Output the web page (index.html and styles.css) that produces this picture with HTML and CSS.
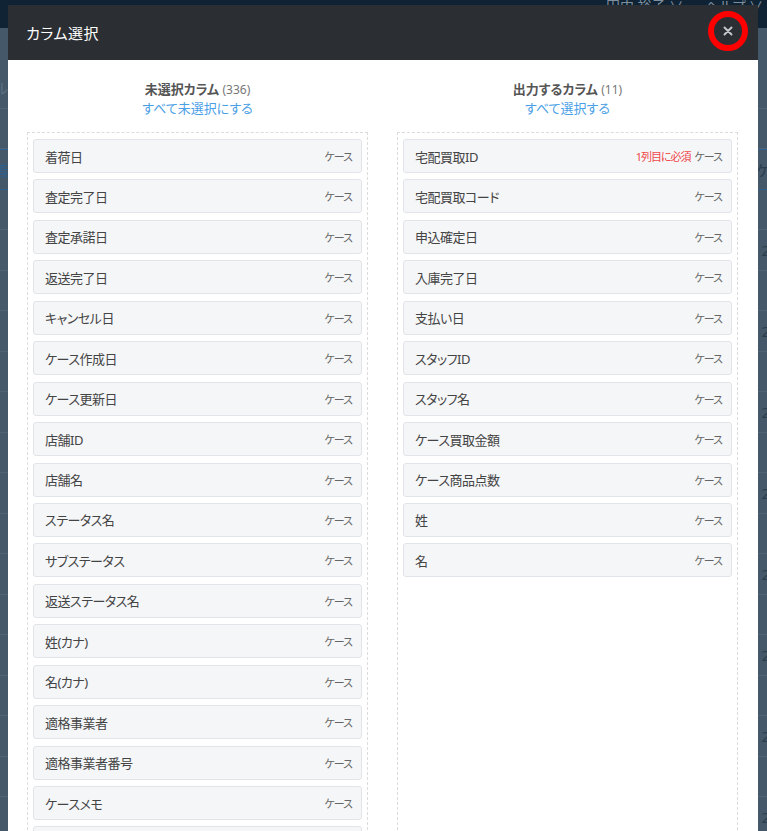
FILE: index.html
```html
<!DOCTYPE html>
<html lang="ja">
<head>
    <meta charset="UTF-8">
    <meta name="viewport" content="width=device-width, initial-scale=1.0">
    <title>カラム選択</title>
    <link rel="stylesheet" href="styles.css">
</head>
<body>

<!-- 背景のページ (モーダルで暗くなっている) -->
<div class="page">
    <div class="topbar">
        <span class="user">田中 裕子 ∨</span>
        <span class="help">ヘルプ ∨</span>
    </div>
    <div class="rows">
        <div class="row"><span class="cell-l">ル</span><span class="cell-r"></span></div>
        <div class="row"><span class="cell-l"></span><span class="cell-r"></span></div>
        <div class="row row-active"><span class="cell-l">着</span><span class="cell-r">ケ</span></div>
        <div class="row"><span class="cell-l"></span><span class="cell-r"></span></div>
        <div class="row"><span class="cell-l"></span><span class="cell-r">2</span></div>
        <div class="row"><span class="cell-l"></span><span class="cell-r"></span></div>
        <div class="row"><span class="cell-l"></span><span class="cell-r">2</span></div>
        <div class="row"><span class="cell-l"></span><span class="cell-r"></span></div>
        <div class="row"><span class="cell-l"></span><span class="cell-r">2</span></div>
        <div class="row"><span class="cell-l"></span><span class="cell-r"></span></div>
        <div class="row"><span class="cell-l"></span><span class="cell-r">2</span></div>
        <div class="row"><span class="cell-l"></span><span class="cell-r"></span></div>
        <div class="row"><span class="cell-l"></span><span class="cell-r">2</span></div>
        <div class="row"><span class="cell-l"></span><span class="cell-r"></span></div>
        <div class="row"><span class="cell-l"></span><span class="cell-r">2</span></div>
        <div class="row"><span class="cell-l"></span><span class="cell-r"></span></div>
        <div class="row"><span class="cell-l"></span><span class="cell-r">2</span></div>
        <div class="row"><span class="cell-l"></span><span class="cell-r"></span></div>
        <div class="row"><span class="cell-l"></span><span class="cell-r">2</span></div>
        <div class="row"><span class="cell-l"></span><span class="cell-r"></span></div>
    </div>
</div>

<!-- カラム選択 Modal -->
<div class="modal">
    <div class="modal-header">
        <h2>カラム選択</h2>
        <button class="close" type="button">
            <svg width="10" height="10" viewBox="0 0 10 10"><path d="M1.5 1.5L8.5 8.5M8.5 1.5L1.5 8.5" stroke="#c4c6c8" stroke-width="2" stroke-linecap="round"/></svg>
        </button>
    </div>
    <div class="modal-body">
        <div class="col">
            <div class="col-head">
                <div class="col-title"><b>未選択カラム</b> <span class="count">(336)</span></div>
                <a class="col-link" href="#">すべて未選択にする</a>
            </div>
            <ul class="col-list">
                <li class="item"><span>着荷日</span><span class="tag">ケース</span></li>
                <li class="item"><span>査定完了日</span><span class="tag">ケース</span></li>
                <li class="item"><span>査定承諾日</span><span class="tag">ケース</span></li>
                <li class="item"><span>返送完了日</span><span class="tag">ケース</span></li>
                <li class="item"><span>キャンセル日</span><span class="tag">ケース</span></li>
                <li class="item"><span>ケース作成日</span><span class="tag">ケース</span></li>
                <li class="item"><span>ケース更新日</span><span class="tag">ケース</span></li>
                <li class="item"><span>店舗ID</span><span class="tag">ケース</span></li>
                <li class="item"><span>店舗名</span><span class="tag">ケース</span></li>
                <li class="item"><span>ステータス名</span><span class="tag">ケース</span></li>
                <li class="item"><span>サブステータス</span><span class="tag">ケース</span></li>
                <li class="item"><span>返送ステータス名</span><span class="tag">ケース</span></li>
                <li class="item"><span>姓(カナ)</span><span class="tag">ケース</span></li>
                <li class="item"><span>名(カナ)</span><span class="tag">ケース</span></li>
                <li class="item"><span>適格事業者</span><span class="tag">ケース</span></li>
                <li class="item"><span>適格事業者番号</span><span class="tag">ケース</span></li>
                <li class="item"><span>ケースメモ</span><span class="tag">ケース</span></li>
                <li class="item"><span>ケース備考</span><span class="tag">ケース</span></li>
            </ul>
        </div>
        <div class="col">
            <div class="col-head">
                <div class="col-title"><b>出力するカラム</b> <span class="count">(11)</span></div>
                <a class="col-link" href="#">すべて選択する</a>
            </div>
            <ul class="col-list">
                <li class="item"><span>宅配買取ID</span><span class="tag"><span class="required">1列目に必須</span>ケース</span></li>
                <li class="item"><span>宅配買取コード</span><span class="tag">ケース</span></li>
                <li class="item"><span>申込確定日</span><span class="tag">ケース</span></li>
                <li class="item"><span>入庫完了日</span><span class="tag">ケース</span></li>
                <li class="item"><span>支払い日</span><span class="tag">ケース</span></li>
                <li class="item"><span>スタッフID</span><span class="tag">ケース</span></li>
                <li class="item"><span>スタッフ名</span><span class="tag">ケース</span></li>
                <li class="item"><span>ケース買取金額</span><span class="tag">ケース</span></li>
                <li class="item"><span>ケース商品点数</span><span class="tag">ケース</span></li>
                <li class="item"><span>姓</span><span class="tag">ケース</span></li>
                <li class="item"><span>名</span><span class="tag">ケース</span></li>
            </ul>
        </div>
    </div>
</div>

</body>
</html>
```

FILE: styles.css
```css
html, body {
    height: 100%;
}
body {
    margin: 0;
    overflow: hidden;
    background-color: #44586a;
    font-family: "Noto Sans", "Noto Sans CJK JP", sans-serif;
    font-feature-settings: "palt";
}

/* 背景ページ */
.topbar {
    height: 28px;
    background-color: #0f2335;
    display: flex;
    justify-content: flex-end;
    gap: 22px;
    padding-right: 4px;
    color: #7f8e9c;
    font-size: 14px;
    line-height: 12px;
}
.rows {
    padding-top: 40px;
}
.row {
    height: 40.5px;
    box-sizing: border-box;
    border-bottom: 1px solid #4f6376;
    display: flex;
    justify-content: space-between;
    align-items: center;
    color: #2c3d4c;
    font-size: 15px;
}
.row-active {
    border-top: 1px solid #2f5f8c;
    border-bottom: 1px solid #2f5f8c;
}
.row-active .cell-l {
    color: #2f5f8c;
}
.cell-l {
    margin-left: -6px;
    color: #5d6f80;
}
.cell-r {
    margin-right: -3px;
}

/* モーダル */
.modal {
    position: fixed;
    top: 5px;
    left: 8px;
    width: 750px;
    height: 900px;
    background-color: #fff;
    display: flex;
    flex-direction: column;
}
.modal-header {
    height: 55px;
    background-color: #2b2f33;
    display: flex;
    align-items: center;
    justify-content: space-between;
    padding: 0 10px 0 18px;
    flex-shrink: 0;
}
.modal-header h2 {
    margin: 0;
    color: #fff;
    font-size: 15px;
    font-weight: normal;
    letter-spacing: 0.5px;
}
.close {
    width: 40px;
    height: 40px;
    margin-top: -3px;
    border: 6px solid #ff0000;
    border-radius: 50%;
    background: transparent;
    padding: 0;
    display: flex;
    align-items: center;
    justify-content: center;
    cursor: pointer;
}
.modal-body {
    flex: 1;
    display: grid;
    grid-template-columns: 341px 341px;
    column-gap: 29px;
    padding: 20px 20px 0 19px;
}
.col {
    display: flex;
    flex-direction: column;
}
.col-head {
    text-align: center;
    margin-bottom: 14px;
    font-size: 13px;
    line-height: 19px;
}
.col-title {
    color: #555;
}
.col-title b {
    font-weight: bold;
}
.count {
    color: #777;
    font-size: 12px;
}
.col-link {
    color: #4aa0e6;
    text-decoration: none;
}
.col-list {
    flex: 1;
    list-style: none;
    margin: 0;
    padding: 6px 5px 6px 5px;
    border: 1px dashed #dcdcdc;
}
.item {
    height: 34px;
    box-sizing: border-box;
    margin-bottom: 6.45px;
    padding: 0 9px 0 11px;
    background-color: #f5f6f8;
    border: 1px solid #e1e4e9;
    border-radius: 3px;
    display: flex;
    align-items: center;
    justify-content: space-between;
    color: #444;
    font-size: 13px;
    letter-spacing: -0.5px;
}
.tag {
    color: #666;
    font-size: 11px;
    letter-spacing: -1px;
}
.required {
    color: #f04848;
    margin-right: 4px;
}
```
